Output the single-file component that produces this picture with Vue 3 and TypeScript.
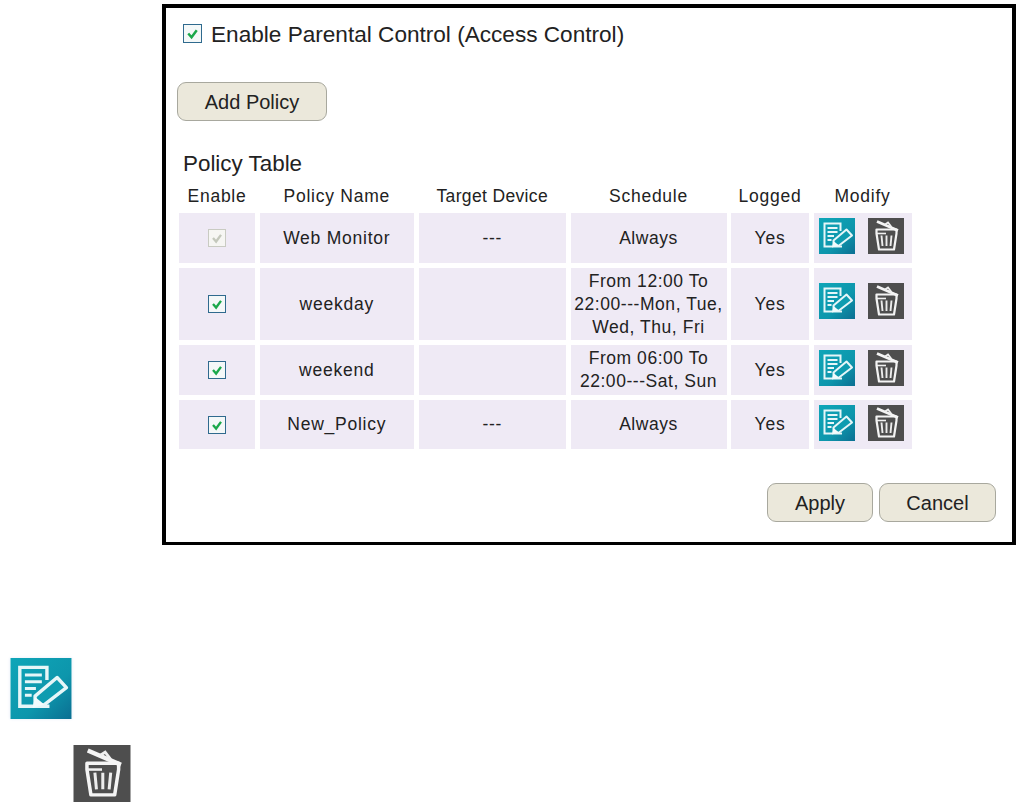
<script setup lang="ts">
interface Row {
  name: string
  target: string
  schedule: string[]
  disabled?: boolean
  tall?: boolean
}
const rows: Row[] = [
  { name: 'Web Monitor', target: '---', schedule: ['Always'], disabled: true },
  { name: 'weekday', target: '', schedule: ['From 12:00 To', '22:00---Mon, Tue,', 'Wed, Thu, Fri'], tall: true },
  { name: 'weekend', target: '', schedule: ['From 06:00 To', '22:00---Sat, Sun'] },
  { name: 'New_Policy', target: '---', schedule: ['Always'] },
]
const heads = ['Enable', 'Policy Name', 'Target Device', 'Schedule', 'Logged', 'Modify']
</script>

<template>
  <div class="page">
    <svg class="defs" width="0" height="0" aria-hidden="true">
      <defs>
        <linearGradient id="teal" x1="0" y1="0" x2="1" y2="1">
          <stop offset="0" stop-color="#0fa6b8" />
          <stop offset="0.6" stop-color="#0d96ac" />
          <stop offset="1" stop-color="#0b6f92" />
        </linearGradient>
        <symbol id="edit" viewBox="0 0 36 36">
          <rect width="36" height="36" fill="url(#teal)" />
          <path d="M21.5 13V5.5H5.5V28.5H23" fill="none" stroke="#e6f6f8" stroke-width="2" />
          <path d="M8.5 10H18.5M8.5 14H18.5M8.5 18H15M8.5 22H12.5" stroke="#e6f6f8" stroke-width="1.8" fill="none" />
          <path d="M14.5 22.5L27.5 11.5L33 17.5L20 27.5L14.5 28Z" fill="#0e9cb0" stroke="#e6f6f8" stroke-width="2" stroke-linejoin="round" />
          <path d="M13 29.5L14.5 23L20 27.5Z" fill="#f2fbfc" />
        </symbol>
        <symbol id="trash" viewBox="0 0 36 36">
          <rect width="36" height="36" fill="#4e4e4e" />
          <path d="M9 3.5L30 12.5" stroke="#f4f4f4" stroke-width="2.8" fill="none" />
          <path d="M17 6.5L20 4.5L23.5 9" stroke="#f0f0f0" stroke-width="1.8" fill="none" />
          <path d="M8.5 11.5H28.5V15.5L26 31.5H11L8.5 15.5Z" fill="none" stroke="#f4f4f4" stroke-width="2.2" stroke-linejoin="round" />
          <path d="M8.5 15.5H18" stroke="#f0f0f0" stroke-width="1.6" fill="none" />
          <path d="M13.5 17.5L14.5 28M18.5 17.5V28M23.5 17.5L22.5 28" stroke="#ececec" stroke-width="1.9" fill="none" />
        </symbol>
      </defs>
    </svg>

    <section class="panel">
      <label class="enable-row">
        <span class="check check-main">
          <svg viewBox="0 0 18 18"><path d="M4.5 9L8 13L13.5 5.5" fill="none" stroke="#1aa84a" stroke-width="2.6" /></svg>
        </span>
        <span class="enable-text">Enable Parental Control (Access Control)</span>
      </label>

      <button class="btn btn-add" type="button">Add Policy</button>

      <h2 class="title">Policy Table</h2>

      <div class="grid">
        <div v-for="h in heads" :key="h" class="head">{{ h }}</div>
        <template v-for="r in rows" :key="r.name">
          <div class="cell" :class="{ tall: r.tall }">
            <span class="check" :class="{ off: r.disabled }">
              <svg viewBox="0 0 18 18"><path d="M4.5 9L8 13L13.5 5.5" fill="none" :stroke="r.disabled ? '#c4c8bc' : '#1aa84a'" stroke-width="2.6" /></svg>
            </span>
          </div>
          <div class="cell">{{ r.name }}</div>
          <div class="cell">{{ r.target }}</div>
          <div class="cell sched">
            <span v-for="l in r.schedule" :key="l">{{ l }}</span>
          </div>
          <div class="cell">Yes</div>
          <div class="cell actions" :class="{ 'actions-tall': r.tall }">
            <svg class="ico"><use href="#edit" /></svg>
            <svg class="ico"><use href="#trash" /></svg>
          </div>
        </template>
      </div>

      <div class="footer">
        <button class="btn btn-apply" type="button">Apply</button>
        <button class="btn btn-cancel" type="button">Cancel</button>
      </div>
    </section>

    <div class="legend">
      <svg class="big-edit"><use href="#edit" /></svg>
      <svg class="big-trash"><use href="#trash" /></svg>
    </div>
  </div>
</template>

<style>
html, body { margin: 0; background: #fff; }
</style>

<style scoped>
.page {
  width: 1021px;
  height: 810px;
  overflow: hidden;
  padding-top: 4px;
  box-sizing: border-box;
  font-family: "Liberation Sans", Arial, sans-serif;
  color: #222;
}
.defs { position: absolute; }
.panel {
  box-sizing: border-box;
  width: 854px;
  height: 541px;
  margin-left: 162px;
  border: 4px solid #000;
  border-bottom-width: 3px;
  display: flex;
  flex-direction: column;
  align-items: flex-start;
}
.enable-row {
  display: flex;
  align-items: center;
  margin: 16px 0 0 17px;
  height: 19px;
  gap: 9px;
}
.enable-text { font-size: 22.6px; white-space: nowrap; padding-top: 2px; }
.check {
  box-sizing: border-box;
  display: block;
  width: 18px;
  height: 18px;
  border: 1.5px solid #2f6a8e;
  background: #f4f8f8;
}
.check svg { display: block; width: 100%; height: 100%; }
.check-main { width: 19px; height: 19px; }
.check.off { border-color: #c9cbc2; background: #f6f6f3; }
.btn {
  box-sizing: border-box;
  height: 39px;
  background: #ebe8db;
  border: 1.5px solid #a8a89e;
  border-radius: 9px;
  padding: 2px 0 0;
  font-family: inherit;
  font-size: 20px;
  color: #222;
}
.btn-add { width: 150px; margin: 39px 0 0 11px; }
.title {
  margin: 31px 0 0 17px;
  font-weight: 400;
  font-size: 22.4px;
  line-height: 24px;
}
.grid {
  display: grid;
  grid-template-columns: 76px 154.5px 147.5px 156px 78px 98px;
  grid-template-rows: 32px 50px 72px 50px 49px;
  column-gap: 4.5px;
  row-gap: 5px;
  margin: 0 0 0 13px;
  font-size: 17.5px;
  letter-spacing: 0.75px;
}
.head {
  box-sizing: border-box;
  display: flex;
  align-items: center;
  justify-content: center;
  padding-top: 8px;
  line-height: 24px;
}
.head:nth-child(3) { letter-spacing: 0.35px; }
.cell {
  display: flex;
  align-items: center;
  justify-content: center;
  background: #efeaf5;
  text-align: center;
}
.sched {
  flex-direction: column;
  line-height: 23px;
  letter-spacing: 0.55px;
  white-space: nowrap;
}
.actions {
  align-items: flex-start;
  justify-content: flex-start;
  padding: 5px 0 0 5px;
  gap: 13px;
  box-sizing: border-box;
}
.actions-tall { padding-top: 15px; }
.ico { width: 36px; height: 36px; display: block; }
.footer {
  display: flex;
  gap: 6px;
  align-self: flex-end;
  margin: 34px 16px 0 0;
}
.btn-apply { width: 106px; }
.btn-cancel { width: 117px; }
.legend {
  display: flex;
  flex-direction: column;
  align-items: flex-start;
  margin-top: 113px;
}
.big-edit {
  width: 62px;
  height: 61px;
  margin-left: 10px;
  filter: blur(0.6px);
  box-shadow: 0 0 3px #e6ecf8;
}
.big-trash {
  width: 58px;
  height: 57px;
  margin: 26px 0 0 73px;
  filter: blur(0.6px);
}
</style>
